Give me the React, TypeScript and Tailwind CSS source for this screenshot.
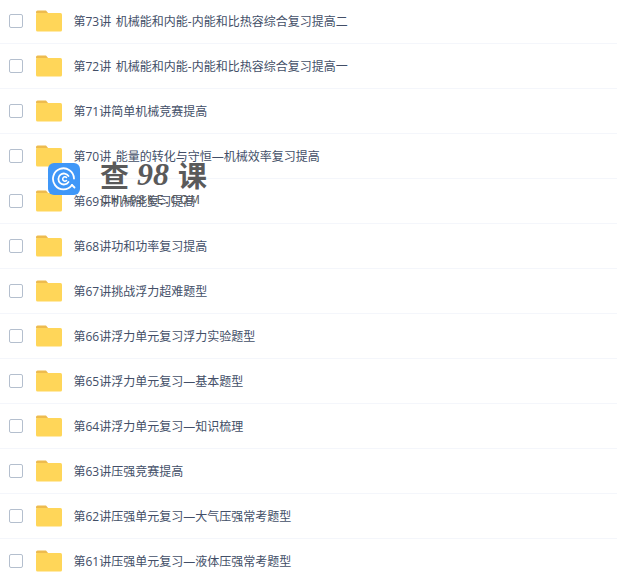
const lessons = [
  "第73讲 机械能和内能-内能和比热容综合复习提高二",
  "第72讲 机械能和内能-内能和比热容综合复习提高一",
  "第71讲简单机械竞赛提高",
  "第70讲 能量的转化与守恒—机械效率复习提高",
  "第69讲机械能复习提高",
  "第68讲功和功率复习提高",
  "第67讲挑战浮力超难题型",
  "第66讲浮力单元复习浮力实验题型",
  "第65讲浮力单元复习—基本题型",
  "第64讲浮力单元复习—知识梳理",
  "第63讲压强竞赛提高",
  "第62讲压强单元复习—大气压强常考题型",
  "第61讲压强单元复习—液体压强常考题型",
]

function FolderIcon() {
  return (
    <svg width="26" height="22" viewBox="0 0 26 22" className="shrink-0">
      <path d="M0 2a1.5 1.5 0 0 1 1.5-1.5h8.5l2.5 3H0z" fill="#EDBB4F" />
      <rect x="0" y="3" width="26" height="18.500" rx="1.500" fill="#FFD659" />
    </svg>
  )
}

function Row({ title }: { title: string }) {
  return (
    <div className="h-[45px] flex items-center border-b border-[#f4f6fb]">
      <div className="ml-[9px] w-[14px] h-[14px] rounded-[2px] border border-[#b4bfce] bg-white shrink-0" />
      <div className="ml-[13px]">
        <FolderIcon />
      </div>
      <span className="ml-[11.500px] pt-[2px] text-[12px] text-[#424e67] whitespace-nowrap [word-spacing:1.500px] font-['Open_Sans','Noto_Sans_CJK_SC',sans-serif]">
        {title}
      </span>
    </div>
  )
}

function Watermark() {
  return (
    <div className="absolute left-[48px] top-[163px] flex items-start">
      <div className="w-[32px] h-[32px] rounded-[6px] bg-[#3f97f8] flex items-center justify-center">
        <svg width="24" height="24" viewBox="0 0 24 24" fill="none" stroke="#fff" strokeLinecap="round">
          <path d="M20 18A10.500 10.500 0 1 1 22 11.500" strokeWidth="1.800" />
          <path d="M16.500 9A5.500 5.500 0 1 0 16.500 15" strokeWidth="1.800" />
          <path d="M14.500 10.500A2.200 2.200 0 1 0 14.500 13.500" strokeWidth="1.500" />
          <path d="M20 18l2.500 2.500" strokeWidth="1.800" />
        </svg>
      </div>
      <div className="ml-[20px] -mt-[6px] text-[#5a5a5a] leading-none">
        <div className="flex items-center h-[34px] whitespace-nowrap">
          <span className="text-[29px] font-bold">查</span>
          <span className="ml-[8px] text-[32px] italic font-bold font-['Liberation_Serif',serif]">98</span>
          <span className="ml-[9px] text-[29px] font-bold">课</span>
        </div>
        <div className="text-[12px] tracking-[1.800px] mt-[2px] ml-[1px] whitespace-nowrap">CHA98KE.COM</div>
      </div>
    </div>
  )
}

export default function App() {
  return (
    <div className="relative w-[617px] h-[572px] overflow-hidden bg-white font-['Noto_Sans_CJK_SC','Liberation_Sans',sans-serif]">
      <div className="-mt-[1px]">
        {lessons.map((title) => (
          <Row key={title} title={title} />
        ))}
      </div>
      <Watermark />
    </div>
  )
}
